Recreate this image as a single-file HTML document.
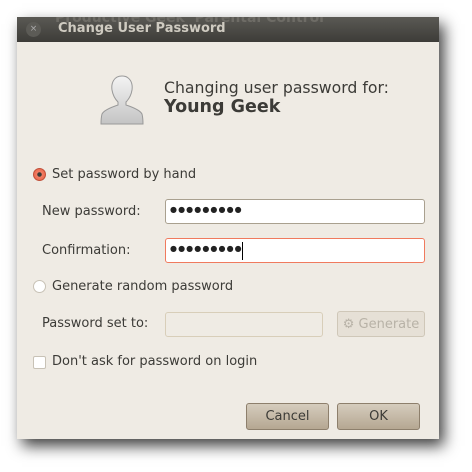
<!DOCTYPE html><html><head><style>
body{margin:0;width:472px;height:472px;background:#fff;position:relative;overflow:hidden;font-family:"DejaVu Sans","Liberation Sans",sans-serif;color:#3c3b37}
.win{position:absolute;left:17px;top:17px;width:422px;height:422px;background:#efebe4;box-shadow:5px 7px 14px rgba(0,0,0,.75)}
.tb{position:absolute;left:0;top:0;width:422px;height:25px;background:linear-gradient(#5a5954,#3d3c38);overflow:hidden}
.tb .t{position:absolute;left:41px;top:4px;font-weight:bold;font-size:13px;color:#cfcbc1}
.tb .bg{position:absolute;left:38px;top:-7px;font-weight:bold;font-size:14px;color:#6e6c66}
.cl{position:absolute;left:9px;top:5px;width:15px;height:15px;border-radius:50%;background:#5c5b56;color:#aaa;font-size:9px;text-align:center;line-height:15px}
.a{position:absolute;font-size:13px;white-space:nowrap}
.in{position:absolute;background:#fff;border:1px solid #a9a08f;border-radius:3px;box-sizing:border-box}
.dots{position:absolute;left:4px;top:5px;font-size:8px;letter-spacing:1.1px;color:#222}
.rad{position:absolute;width:11px;height:11px;border-radius:50%;border:1px solid #c8c2b6;background:#fff}
.btn{position:absolute;border:1px solid #8d7f6c;border-radius:3px;background:linear-gradient(#d5ccbd,#b5a792);font-size:13px;text-align:center;box-sizing:border-box;line-height:25px}
</style></head><body>
<div class="win">
<div class="tb"><div class="bg">Productive Geek &nbsp;Parental Control</div><div class="cl">×</div><div class="t">Change User Password</div></div>
<svg style="position:absolute;left:83px;top:57px" width="44" height="52" viewBox="0 0 44 52"><defs><linearGradient id="g" x1="0" y1="0" x2="0" y2="1"><stop offset="0" stop-color="#f4f4f4"/><stop offset="1" stop-color="#c4c4c4"/></linearGradient></defs><path d="M22 2c-8 0-11 7-10 14 1 6 4 10 6 12v3c-6 2-14 5-16 9-1 4-1 8-1 10h42c0-2 0-6-1-10-2-4-10-7-16-9v-3c2-2 5-6 6-12 1-7-2-14-10-14z" fill="url(#g)" stroke="#999" stroke-width="1"/></svg>
<div class="a" style="left:147px;top:61px;font-size:15.7px">Changing user password for:</div>
<div class="a" style="left:147px;top:80px;font-size:17.5px;font-weight:bold">Young Geek</div>
<div class="rad" style="left:16px;top:151px;border-color:#c0503a;background:radial-gradient(#3c3b37 2px,#f27f66 2.5px,#e65c40)"></div>
<div class="a" style="left:35px;top:150px">Set password by hand</div>
<div class="a" style="left:25px;top:187px">New password:</div>
<div class="in" style="left:148px;top:182px;width:260px;height:25px"><span class="dots">●●●●●●●●●</span></div>
<div class="a" style="left:25px;top:226px">Confirmation:</div>
<div class="in" style="left:148px;top:221px;width:260px;height:25px;border-color:#f07a5e"><span class="dots">●●●●●●●●●</span><span style="position:absolute;left:76px;top:3px;height:18px;border-left:1px solid #000"></span></div>
<div class="rad" style="left:16px;top:263px"></div>
<div class="a" style="left:35px;top:262px">Generate random password</div>
<div class="a" style="left:25px;top:299px">Password set to:</div>
<div class="in" style="left:148px;top:295px;width:158px;height:25px;background:#efebe4;border-color:#d8ceb9"></div>
<div class="btn" style="left:320px;top:294px;width:88px;height:26px;background:#e6e0d6;border-color:#cfc7b8;color:#b8b2a7">⚙ Generate</div>
<div style="position:absolute;left:16px;top:339px;width:11px;height:11px;border:1px solid #c8c2b6;border-radius:2px;background:#fff"></div>
<div class="a" style="left:35px;top:337px">Don't ask for password on login</div>
<div class="btn" style="left:229px;top:386px;width:83px;height:27px">Cancel</div>
<div class="btn" style="left:320px;top:386px;width:83px;height:27px">OK</div>
</div>
</body></html>
